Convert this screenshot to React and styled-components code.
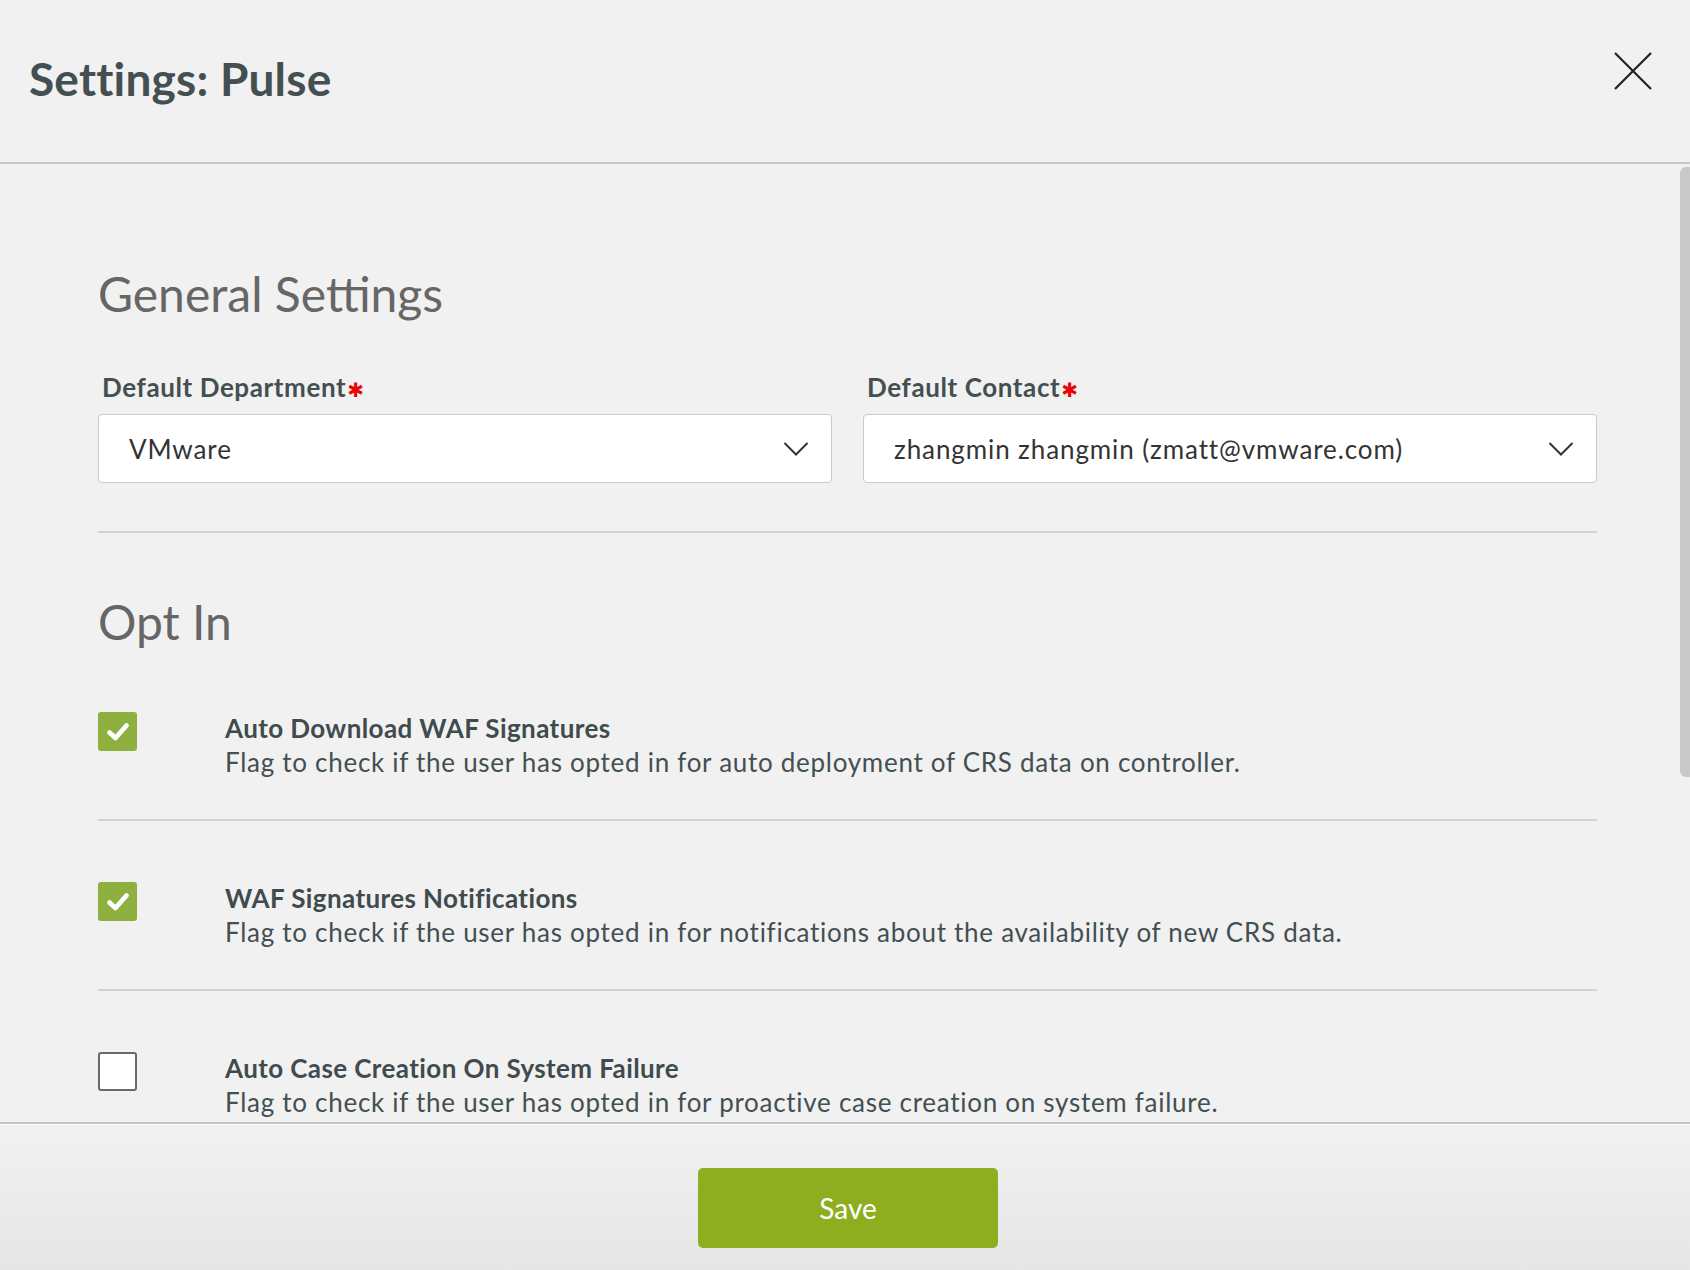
import React, { useState } from "react"
import styled, { createGlobalStyle } from "styled-components"

const GlobalStyle = createGlobalStyle`
  html, body {
    margin: 0;
    padding: 0;
    background: #f1f1f1;
  }
  body {
    font-family: Lato, "Noto Sans", "Liberation Sans", sans-serif;
    color: #434f51;
  }
  * {
    box-sizing: border-box;
  }
`

const Modal = styled.div`
  width: 1690px;
  height: 1270px;
  display: flex;
  flex-direction: column;
  background: #f1f1f1;
  overflow: hidden;
`

const Header = styled.header`
  height: 164px;
  flex: none;
  display: flex;
  align-items: center;
  justify-content: space-between;
  padding: 0 38px 6px 29px;
  border-bottom: 2px solid #c8c8c8;
`

const Title = styled.h1`
  margin: 0;
  font-size: 46px;
  font-weight: 700;
  color: #434f51;
  letter-spacing: 0.2px;
`

const CloseButton = styled.button`
  width: 38px;
  height: 38px;
  padding: 0;
  border: none;
  background: none;
  cursor: pointer;
  margin-top: -14px;
`

const Body = styled.div`
  flex: 1;
  position: relative;
  overflow: hidden;
`

const ScrollThumb = styled.div`
  position: absolute;
  top: 3px;
  right: 0;
  width: 10px;
  height: 610px;
  border-radius: 6px 0 0 6px;
  background: #c9c9c9;
`

const Content = styled.div`
  padding: 101px 93px 0 98px;
`

const SectionTitle = styled.h2`
  margin: 0;
  font-size: 48px;
  line-height: 58px;
  font-weight: 400;
  color: #666;
`

const FieldGrid = styled.div`
  display: grid;
  grid-template-columns: 1fr 1fr;
  column-gap: 31px;
  margin-top: 47px;
`

const Field = styled.div`
  display: flex;
  flex-direction: column;
`

const Label = styled.label`
  font-size: 26px;
  line-height: 34px;
  font-weight: 700;
  color: #434f51;
  letter-spacing: 0.6px;
  padding-left: 4px;
  margin-bottom: 7px;
`

const Required = styled.span`
  color: #e8060b;
  font-family: "DejaVu Sans", sans-serif;
  font-size: 20px;
  margin-left: 1px;
  vertical-align: 0;
`

const Select = styled.div`
  height: 69px;
  display: flex;
  align-items: center;
  justify-content: space-between;
  padding: 0 22px 0 30px;
  background: #fff;
  border: 1.5px solid #cacaca;
  border-radius: 4px;
  font-size: 26px;
  letter-spacing: 0.9px;
  color: #333;
`

const Divider = styled.hr`
  margin: ${(p) => p.$top || 0}px 0 0;
  border: none;
  border-top: 2px solid #d2d2d2;
`

const OptTitle = styled(SectionTitle)`
  margin-top: 60px;
`

const OptRow = styled.div`
  display: flex;
  align-items: flex-start;
  gap: 88px;
  padding: 60px 0 40px;
  border-bottom: ${(p) => (p.$last ? "none" : "2px solid #d2d2d2")};
`

const Checkbox = styled.div`
  flex: none;
  width: 39px;
  height: 39px;
  margin-top: 1px;
  border-radius: 3px;
  display: flex;
  align-items: center;
  justify-content: center;
  cursor: pointer;
  background: ${(p) => (p.$checked ? "#8db03f" : "#fff")};
  border: ${(p) => (p.$checked ? "none" : "2px solid #6a6a6a")};
`

const OptText = styled.div`
  display: flex;
  flex-direction: column;
`

const OptName = styled.div`
  font-size: 26px;
  line-height: 34px;
  font-weight: 700;
  letter-spacing: 0.4px;
  color: #3f4b4d;
`

const OptDesc = styled.div`
  font-size: 26px;
  line-height: 34px;
  font-weight: 400;
  letter-spacing: 0.72px;
  color: #434f51;
`

const Footer = styled.footer`
  flex: none;
  height: 148px;
  display: flex;
  justify-content: center;
  align-items: flex-start;
  padding-top: 44px;
  border-top: 2px solid #c4c4c4;
  box-shadow: inset 0 1px 0 #fff;
  background: linear-gradient(#f1f1f1, #e6e6e6);
`

const SaveButton = styled.button`
  width: 300px;
  height: 80px;
  margin-left: 6px;
  border: none;
  border-radius: 5px;
  background: #8eae20;
  color: #fff;
  font-family: inherit;
  font-size: 28px;
  cursor: pointer;
`

const Chevron = () => (
  <svg width="26" height="16" viewBox="0 0 26 16" fill="none">
    <path d="M1.5 2 L13 13.5 L24.5 2" stroke="#333" strokeWidth="2" />
  </svg>
)

const Check = () => (
  <svg width="24" height="20" viewBox="0 0 24 20" fill="none">
    <path d="M3.5 10.5 L9.5 16 L20.5 3.5" stroke="#fff" strokeWidth="4.8" strokeLinecap="round" strokeLinejoin="round" />
  </svg>
)

const options = [
  {
    id: "waf-download",
    name: "Auto Download WAF Signatures",
    desc: "Flag to check if the user has opted in for auto deployment of CRS data on controller.",
    checked: true,
  },
  {
    id: "waf-notify",
    name: "WAF Signatures Notifications",
    desc: "Flag to check if the user has opted in for notifications about the availability of new CRS data.",
    checked: true,
  },
  {
    id: "case",
    name: "Auto Case Creation On System Failure",
    desc: "Flag to check if the user has opted in for proactive case creation on system failure.",
    checked: false,
  },
]

const App = () => {
  const [checked, setChecked] = useState(options.map((o) => o.checked))

  const toggle = (i) => {
    setChecked((prev) => prev.map((v, j) => (j === i ? !v : v)))
  }

  return (
    <>
      <GlobalStyle />
      <Modal>
        <Header>
          <Title>Settings: Pulse</Title>
          <CloseButton aria-label="Close">
            <svg width="38" height="38" viewBox="0 0 38 38">
              <path d="M1 1 L37 37 M37 1 L1 37" stroke="#222" strokeWidth="2.2" />
            </svg>
          </CloseButton>
        </Header>
        <Body>
          <ScrollThumb />
          <Content>
            <SectionTitle>General Settings</SectionTitle>
            <FieldGrid>
              <Field>
                <Label>
                  Default Department<Required>✱</Required>
                </Label>
                <Select>
                  <span>VMware</span>
                  <Chevron />
                </Select>
              </Field>
              <Field>
                <Label>
                  Default Contact<Required>✱</Required>
                </Label>
                <Select>
                  <span>zhangmin zhangmin (zmatt@vmware.com)</span>
                  <Chevron />
                </Select>
              </Field>
            </FieldGrid>
            <Divider $top={48} />
            <OptTitle>Opt In</OptTitle>
            {options.map((opt, i) => (
              <OptRow key={opt.id} $last={i === options.length - 1}>
                <Checkbox $checked={checked[i]} onClick={() => toggle(i)}>
                  {checked[i] && <Check />}
                </Checkbox>
                <OptText>
                  <OptName>{opt.name}</OptName>
                  <OptDesc>{opt.desc}</OptDesc>
                </OptText>
              </OptRow>
            ))}
          </Content>
        </Body>
        <Footer>
          <SaveButton>Save</SaveButton>
        </Footer>
      </Modal>
    </>
  )
}

export default App
